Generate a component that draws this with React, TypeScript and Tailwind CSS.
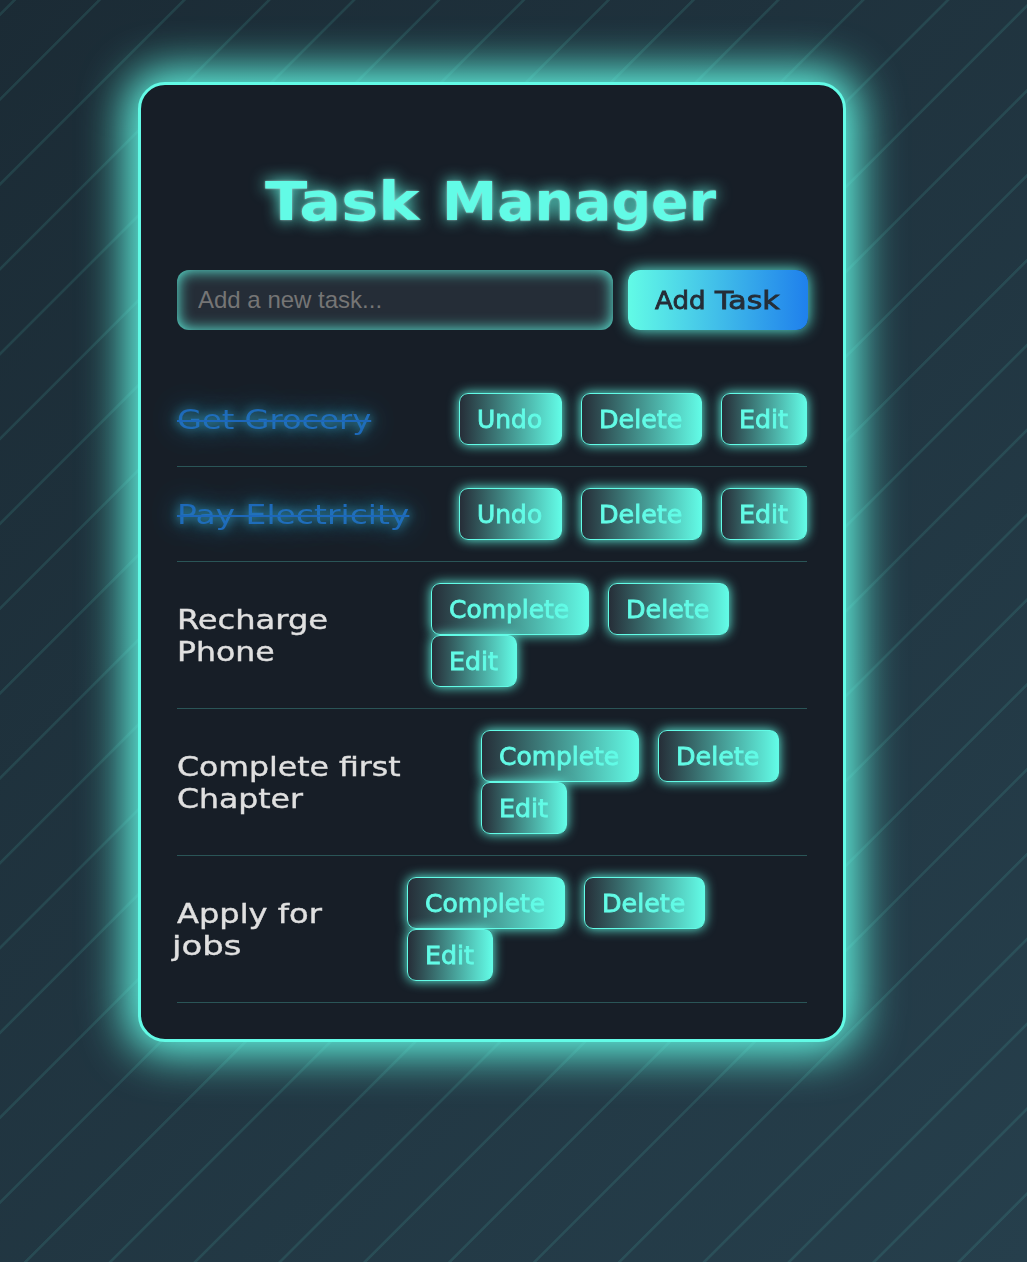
import { useLayoutEffect, useRef, useState } from "react";

type FitProps = { text: string; width: number; className?: string };

/* A single line of display type stretched horizontally to a set measure. */
function Fit({ text, width, className = "" }: FitProps) {
  const ref = useRef<HTMLSpanElement>(null);
  const [scale, setScale] = useState(1);
  useLayoutEffect(() => {
    if (ref.current) setScale(width / ref.current.offsetWidth);
  }, [text, width]);
  return (
    <span className="block text-left whitespace-nowrap" style={{ width }}>
      <span
        ref={ref}
        className={`inline-block origin-left align-top ${className}`}
        style={{ transform: `scaleX(${scale})` }}
      >
        {text}
      </span>
    </span>
  );
}

type Line = { text: string; width: number; shift?: boolean };
type Task = { lines: Line[]; done: boolean; actions: string };

const tasks: Task[] = [
  { lines: [{ text: "Get Grocery", width: 194 }], done: true, actions: "w-[348px]" },
  { lines: [{ text: "Pay Electricity", width: 232 }], done: true, actions: "w-[348px]" },
  {
    lines: [
      { text: "Recharge", width: 151 },
      { text: "Phone", width: 98 },
    ],
    done: false,
    actions: "w-[376px]",
  },
  {
    lines: [
      { text: "Complete first", width: 223 },
      { text: "Chapter", width: 126 },
    ],
    done: false,
    actions: "w-[326px]",
  },
  {
    lines: [
      { text: "Apply for", width: 145 },
      { text: "jobs", width: 69, shift: true },
    ],
    done: false,
    actions: "w-[400px]",
  },
];

const labelWidths: Record<string, number> = { Undo: 65.5, Delete: 83.5, Edit: 48.5, Complete: 120.5 };

function ActionButton({ label }: { label: string }) {
  return (
    <button className="flex h-[52px] items-center rounded-[9px] border border-[#62fbe6] bg-[linear-gradient(90deg,#262e38,#62fbe6)] pt-[2px] pr-[18.5px] pl-[17px] text-[24px] leading-[30px] text-[#62fbe6] shadow-[0_0_12px_#62fbe6]">
      <Fit text={label} width={labelWidths[label]} className="[-webkit-text-stroke:0.8px_#62fbe6]" />
    </button>
  );
}

function TaskRow({ task }: { task: Task }) {
  return (
    <li className="flex items-center justify-between border-b border-[#62fbe6]/25 py-[21px]">
      <div
        className={
          task.done
            ? "pt-[2px] text-[27px] leading-8 text-[#1f80ec] opacity-75 [text-shadow:0_0_10px_#3cc4ee,0_0_26px_#35b0d8]"
            : "pt-[2px] text-[27px] leading-8 text-[#e0e0e0] [-webkit-text-stroke:0.4px_#e0e0e0]"
        }
      >
        {task.lines.map((line) => (
          <div key={line.text} className={line.shift ? "-ml-[5px]" : ""}>
            <Fit text={line.text} width={line.width} className={task.done ? "line-through decoration-2" : ""} />
          </div>
        ))}
      </div>
      <div className={`flex flex-wrap gap-x-[19px] ${task.actions}`}>
        {[task.done ? "Undo" : "Complete", "Delete", "Edit"].map((label) => (
          <ActionButton key={label} label={label} />
        ))}
      </div>
    </li>
  );
}

export default function App() {
  return (
    <div className="min-h-[1262px] bg-[repeating-linear-gradient(135deg,transparent_0px,transparent_8.6px,rgba(98,251,230,0.1)_9.4px,rgba(98,251,230,0.1)_11.2px,transparent_12px,transparent_60px),linear-gradient(135deg,#1b2b35,#263f4c)] pt-[82px] pl-[138px] font-['DejaVu_Sans',sans-serif]">
      <main className="h-[960px] w-[708px] rounded-[27px] border-3 border-[#62fbe6] bg-[#171e27] px-9 shadow-[0_0_45px_12px_#62fbe6]">
        <h1 className="flex gap-[23px] pt-[85px] pl-[88px] text-[54px] leading-[64px] font-bold text-[#62fbe6] [text-shadow:0_0_2px_rgba(255,255,255,0.6),0_0_15px_#62fbe6]">
          <Fit text="Task" width={154} />
          <Fit text="Manager" width={274} />
        </h1>
        <div className="mt-9 flex gap-[15px]">
          <input
            placeholder="Add a new task..."
            className="h-[60px] w-[436px] shrink-0 rounded-xl bg-[#252d37] px-[21px] font-['Liberation_Sans',sans-serif] text-[24px] shadow-[inset_0_0_15px_#62fbe6] outline-none placeholder:text-[#757575]"
          />
          <button className="flex h-[60px] w-[180px] shrink-0 items-center gap-[10px] rounded-xl bg-[linear-gradient(90deg,#62fbe6,#1f80ec)] pt-[2px] pl-[27px] text-[24px] text-[#252d37] shadow-[0_0_15px_#62fbe6]">
            <Fit text="Add" width={50} className="[-webkit-text-stroke:0.8px_#252d37]" />
            <Fit text="Task" width={65} className="[-webkit-text-stroke:0.8px_#252d37]" />
          </button>
        </div>
        <ul className="mt-[42px]">
          {tasks.map((task) => (
            <TaskRow key={task.lines[0].text} task={task} />
          ))}
        </ul>
      </main>
    </div>
  );
}
